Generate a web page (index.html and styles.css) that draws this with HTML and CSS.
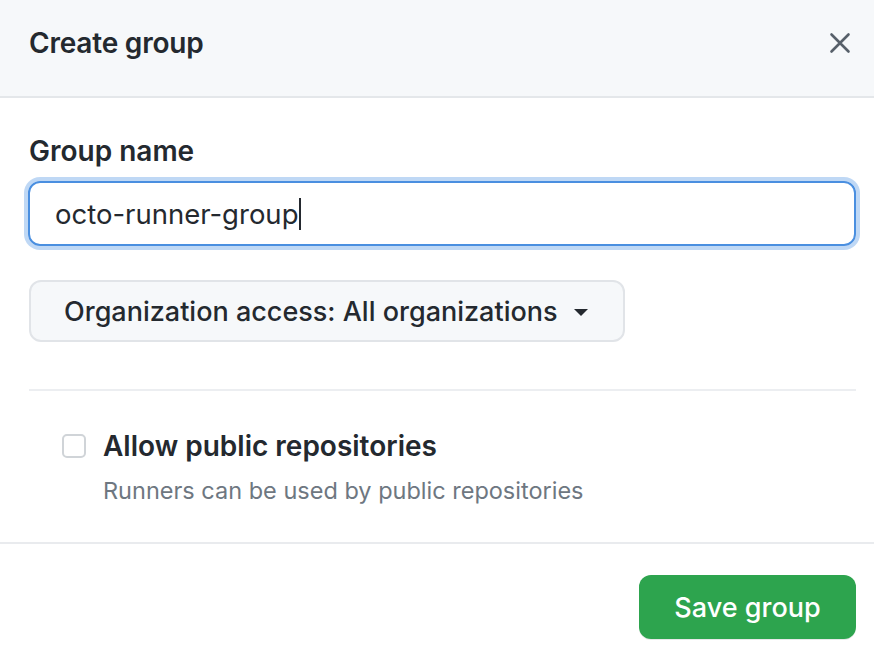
FILE: index.html
```html
<!DOCTYPE html>
<html lang="en">
<head>
<meta charset="utf-8">
<title>Create group</title>
<link rel="stylesheet" href="styles.css">
</head>
<body>
<div class="dialog">
  <header class="dialog-header">
    <h1 class="dialog-title">Create group</h1>
    <button class="close" aria-label="Close">
      <svg width="24" height="24" viewBox="0 0 24 24"><path d="M3.5 3.5 L20.5 20.5 M20.5 3.5 L3.5 20.5" stroke="#57606a" stroke-width="2.6" stroke-linecap="round" fill="none"/></svg>
    </button>
  </header>
  <div class="dialog-body">
    <label class="field-label" for="gname">Group name</label>
    <div class="input"><span class="input-text">octo-runner-group</span><span class="caret"></span></div>
    <button class="select-btn">Organization access: All organizations <span class="dropdown-caret"></span></button>
    <hr class="divider">
    <div class="check-row">
      <span class="checkbox"></span>
      <div class="check-text">
        <div class="check-label">Allow public repositories</div>
        <div class="check-note">Runners can be used by public repositories</div>
      </div>
    </div>
  </div>
  <footer class="dialog-footer">
    <button class="btn-primary">Save group</button>
  </footer>
</div>
</body>
</html>
```
FILE: styles.css
```css
html, body {
  margin: 0;
  padding: 0;
  background: #ffffff;
}
body {
  font-family: Inter, "Liberation Sans", Arial, sans-serif;
  color: #24292f;
  width: 874px;
  height: 664px;
  overflow: hidden;
}
.dialog {
  width: 874px;
  height: 664px;
  display: flex;
  flex-direction: column;
}
.dialog-header {
  box-sizing: border-box;
  background: #f6f8fa;
  border-bottom: 2px solid #e4e7ea;
  display: flex;
  align-items: center;
  justify-content: space-between;
  padding: 0 22px 0 29px;
  flex: none;
  height: 98px;
}
.dialog-title {
  margin: 0;
  font-size: 28px;
  font-weight: 600;
  letter-spacing: -0.2px;
  position: relative;
  top: -5px;
}
.close {
  background: none;
  border: 0;
  padding: 0;
  width: 24px;
  height: 24px;
  display: flex;
  position: relative;
  top: -5px;
}
.close svg { display: block; }
.dialog-body {
  padding: 35px 18px 0 28px;
  display: flex;
  flex-direction: column;
  align-items: flex-start;
  flex: none;
  height: 444px;
  box-sizing: border-box;
}
.field-label {
  font-size: 28px;
  font-weight: 600;
  line-height: 36px;
  margin-left: 1px;
  margin-bottom: 12px;
}
.input {
  align-self: stretch;
  height: 65px;
  box-sizing: border-box;
  border: 2px solid #4a8fe0;
  border-radius: 12px;
  box-shadow: 0 0 0 4px rgba(72, 143, 226, 0.35);
  display: flex;
  align-items: center;
  padding-left: 25px;
  font-size: 27.5px;
}
.input-text { color: #24292f; }
.caret {
  display: inline-block;
  width: 2px;
  height: 32px;
  background: #24292f;
  margin-left: 1px;
}
.select-btn {
  margin-top: 34px;
  margin-left: 1px;
  height: 62px;
  box-sizing: border-box;
  padding: 0 35px 0 33px;
  background: #f6f8fa;
  border: 2px solid #e1e4e8;
  border-radius: 12px;
  font-family: inherit;
  font-size: 27px;
  font-weight: 500;
  color: #24292f;
  display: flex;
  align-items: center;
  gap: 16px;
}
.dropdown-caret {
  width: 0;
  height: 0;
  border-left: 7px solid transparent;
  border-right: 7px solid transparent;
  border-top: 7px solid #24292f;
  margin-top: 3px;
}
.divider {
  align-self: stretch;
  margin: 47px 0 0 1px;
  border: 0;
  height: 2px;
  background: #eceef1;
}
.check-row {
  display: flex;
  align-items: flex-start;
  margin-top: 39px;
  margin-left: 34px;
  gap: 17px;
}
.checkbox {
  width: 24px;
  height: 24px;
  box-sizing: border-box;
  border: 2px solid #d0d4d8;
  border-radius: 5px;
  background: #fff;
  margin-top: 4px;
}
.check-label {
  font-size: 28px;
  font-weight: 600;
  line-height: 32px;
}
.check-note {
  font-size: 23.5px;
  color: #6e7781;
  line-height: 28px;
  margin-top: 15px;
}
.dialog-footer {
  border-top: 2px solid #e9ebee;
  flex: 1;
  display: flex;
  justify-content: flex-end;
  align-items: flex-start;
  padding: 31px 18px 0 0;
}
.btn-primary {
  height: 64px;
  width: 217px;
  border: 0;
  border-radius: 12px;
  background: #2da44e;
  color: #fff;
  font-family: inherit;
  font-size: 27px;
  font-weight: 500;
  box-shadow: 0 1px 0 rgba(27,31,36,0.1);
}
```
